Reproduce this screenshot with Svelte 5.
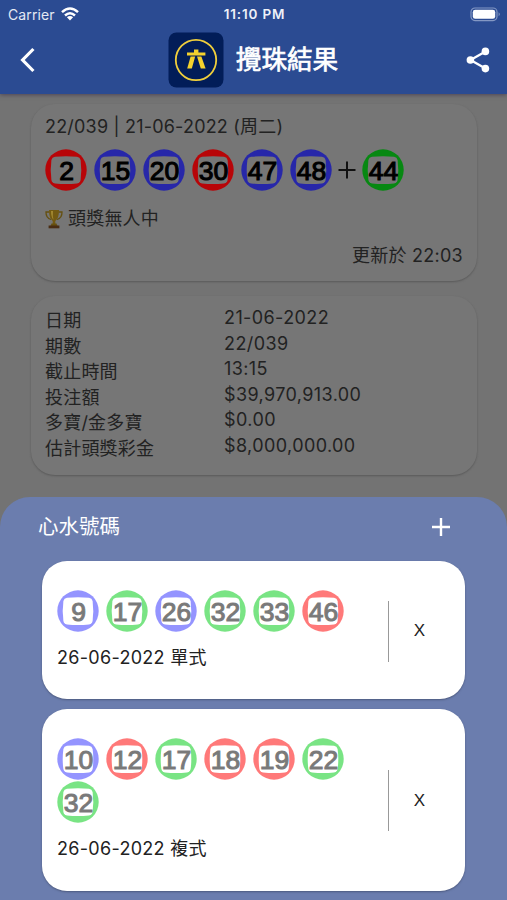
<script lang="ts">
	type Color = 'red' | 'blue' | 'green';
	type Ball = { n: number; color: Color };

	const RED = [1, 2, 7, 8, 12, 13, 18, 19, 23, 24, 29, 30, 34, 35, 40, 45, 46];
	const BLUE = [3, 4, 9, 10, 14, 15, 20, 25, 26, 31, 36, 37, 41, 42, 47, 48];

	function toBall(n: number): Ball {
		if (RED.includes(n)) return { n, color: 'red' };
		return { n, color: BLUE.includes(n) ? 'blue' : 'green' };
	}

	const drawn = [2, 15, 20, 30, 47, 48].map(toBall);
	const extra = toBall(44);

	const details = [
		['日期', '21-06-2022'],
		['期數', '22/039'],
		['截止時間', '13:15'],
		['投注額', '$39,970,913.00'],
		['多寶/金多寶', '$0.00'],
		['估計頭獎彩金', '$8,000,000.00']
	];

	const tickets = [
		{ date: '26-06-2022', type: '單式', balls: [9, 17, 26, 32, 33, 46].map(toBall) },
		{ date: '26-06-2022', type: '複式', balls: [10, 12, 17, 18, 19, 22, 32].map(toBall) }
	];
</script>

{#snippet ballIcon(ball: Ball)}
	<svg class="ball {ball.color}" viewBox="0 0 42 42">
		<circle cx="21" cy="21" r="20.7" />
		<path d="M10 7.8Q21 6.6 32 7.8Q35 8.2 35.6 11Q37 21 35.6 31Q35 34 32 34.4Q21 35.6 10 34.4Q7 34 6.4 31Q5 21 6.4 11Q7 8.2 10 7.8Z" />
		<text x="21.6" y="30.6" text-anchor="middle">{ball.n}</text>
	</svg>
{/snippet}

<div class="screen">
	<header>
		<div class="status">
			<span class="carrier">
				Carrier
				<svg width="18" height="14" viewBox="0 0 18 14">
					<g fill="none" stroke="#fff" stroke-width="2.5">
						<path d="M1 5.2Q9-2.2 17 5.2" />
						<path d="M4 8.5Q9 4 14 8.5" />
					</g>
					<path fill="#fff" d="M5.9 10.3Q9 7.8 12.1 10.3L9 13.5Z" />
				</svg>
			</span>
			<span class="clock">11:10 PM</span>
			<svg class="battery" width="31" height="15" viewBox="0 0 31 15">
				<rect x="1" y="1" width="26" height="12.6" rx="4" fill="none" stroke="#8498c4" stroke-width="1.2" />
				<rect x="2.8" y="2.8" width="22.4" height="9" rx="2.4" fill="#fff" />
				<path d="M28.6 5.3Q31 7.3 28.6 9.3Z" fill="#8498c4" />
			</svg>
		</div>
		<div class="bar">
			<svg class="back" width="18" height="26" viewBox="0 0 18 26">
				<path d="M13.4 2L2.6 13L13.4 24" fill="none" stroke="#fff" stroke-width="3.2" />
			</svg>
			<div class="title">
				<svg width="56" height="56" viewBox="0 0 56 56">
					<rect x=".5" y=".5" width="55" height="55" rx="8" fill="#021d58" />
					<circle cx="28" cy="28" r="20.2" fill="none" stroke="#efce3c" stroke-width="1.8" />
					<g fill="#f4d22d">
						<path d="M26 17.6H30.4V20.4H37.4V23.6H19V20.4H26Z" />
						<path d="M22.6 24.6H27.2L23.8 36.4H19.2Z" />
						<path d="M29 24.6H33.4L37.6 36.4H32.8Z" />
					</g>
				</svg>
				<h1>攪珠結果</h1>
			</div>
			<svg class="share" width="24" height="26" viewBox="0 0 24 26">
				<path d="M19.5 4.5L4.5 13L19.5 21.5" fill="none" stroke="#fff" stroke-width="2.3" />
				<g fill="#fff">
					<circle cx="19.4" cy="4.4" r="3.8" />
					<circle cx="4.4" cy="13" r="3.8" />
					<circle cx="19.4" cy="21.6" r="3.8" />
				</g>
			</svg>
		</div>
	</header>

	<main>
		<section class="card result">
			<p class="draw">22/039 | 21-06-2022 (周二)</p>
			<div class="balls">
				{#each drawn as ball}
					{@render ballIcon(ball)}
				{/each}
				<svg class="plus" width="18" height="18" viewBox="0 0 18 18">
					<path d="M9 .5V17.5M.5 9H17.5" />
				</svg>
				{@render ballIcon(extra)}
			</div>
			<p class="prize">
				<svg width="18" height="20" viewBox="0 0 18 20">
					<path d="M4.5 3H1Q.8 9 6 10.5M13.5 3H17Q17.2 9 12 10.5" fill="none" stroke="#655010" stroke-width="1.3" />
					<path d="M4 1H14Q14 9.5 10.3 12V15H7.7V12Q4 9.5 4 1Z" fill="#735a12" />
					<path d="M6 2H8Q7.4 7 8.5 10.7Q6 8 6 2Z" fill="#a38931" />
					<path d="M6.5 14.5H11.5L12.5 17H5.5Z" fill="#67500f" />
					<path d="M3.6 16.5H14.4V19.3H3.6Z" fill="#4a2d13" />
				</svg>
				頭獎無人中
			</p>
			<p class="updated">更新於 22:03</p>
		</section>

		<section class="card details">
			{#each details as [label, value]}
				<span class="label">{label}</span>
				<span class="value">{value}</span>
			{/each}
		</section>
	</main>

	<section class="sheet">
		<div class="sheet-head">
			<h2>心水號碼</h2>
			<svg width="18" height="18" viewBox="0 0 18 18">
				<path d="M9 0V18M0 9H18" stroke="#fff" stroke-width="2.4" />
			</svg>
		</div>
		{#each tickets as ticket}
			<article class="ticket">
				<div class="pick">
					<div class="balls">
						{#each ticket.balls as ball}
							{@render ballIcon(ball)}
						{/each}
					</div>
					<p>{ticket.date} {ticket.type}</p>
				</div>
				<div class="divider"></div>
				<button type="button">X</button>
			</article>
		{/each}
	</section>
</div>

<style>
	:global(body) {
		margin: 0;
		background: #737373;
	}

	.screen {
		display: flex;
		flex-direction: column;
		height: 900px;
		overflow: hidden;
		background: #737373;
		font-family: Inter, 'Noto Sans CJK TC', sans-serif;
		font-size: 18px;
		color: #222;
	}

	h1,
	h2,
	p {
		margin: 0;
		font-weight: 400;
		white-space: nowrap;
	}

	svg {
		display: block;
		flex: none;
	}

	header {
		flex: none;
		height: 94px;
		background: #2b4b92;
		color: #fff;
		box-shadow: 0 1px 4px #4d4657;
	}

	.status {
		display: grid;
		grid-template-columns: 1fr auto 1fr;
		align-items: center;
		height: 28px;
		padding: 0 6px 0 8px;
		font-size: 14px;
	}

	.carrier {
		display: flex;
		align-items: center;
		gap: 6px;
		letter-spacing: 0.1px;
		color: #e4e9f4;
	}

	.clock {
		font-size: 13.5px;
		font-weight: 600;
		letter-spacing: 0.8px;
		color: #eef1f8;
	}

	.battery {
		justify-self: end;
	}

	.bar {
		display: flex;
		align-items: center;
		justify-content: space-between;
		height: 63px;
		padding: 0 17px 0 20px;
	}

	.title {
		display: flex;
		align-items: center;
		gap: 12px;
		margin-left: 2px;
	}

	h1 {
		font-size: 25.6px;
		line-height: 36px;
		-webkit-text-stroke: 0.7px #fff;
	}

	main {
		flex: none;
		height: 403px;
		padding: 10px 30px 0 31px;
		box-sizing: border-box;
	}

	.card {
		box-sizing: border-box;
		border-radius: 24px;
		background: #767676;
		box-shadow: 0 1px 2px #5a5a5a;
	}

	.result {
		height: 177px;
		padding: 9px 14px 0;
	}

	.draw {
		line-height: 28px;
		letter-spacing: 0.2px;
	}

	.balls {
		display: flex;
		flex-wrap: wrap;
		align-items: center;
		gap: 1px 7px;
	}

	.result .balls {
		margin-top: 8px;
	}

	.ball {
		width: 42px;
		height: 42px;
	}

	.ball path {
		fill: #fff;
	}

	.ball text {
		font: 26.5px 'Liberation Sans', sans-serif;
		fill: #000;
		stroke: #000;
		stroke-width: 1.1px;
	}

	.red {
		fill: #f00;
	}

	.blue {
		fill: #33f;
	}

	.green {
		fill: #00cd15;
	}

	.ticket .ball {
		opacity: 0.52;
	}

	.result .ball path {
		fill: #767676;
	}

	.result .red {
		fill: #b80508;
	}

	.result .blue {
		fill: #2727a9;
	}

	.result .green {
		fill: #078812;
	}

	.plus {
		margin: 0 -1px 0 -1px;
		stroke: #111;
		stroke-width: 2;
	}

	.prize {
		display: flex;
		align-items: center;
		gap: 5px;
		margin-top: 14px;
		line-height: 28px;
		letter-spacing: 0.2px;
	}

	.updated {
		margin-top: 9px;
		line-height: 28px;
		text-align: right;
		letter-spacing: 0.25px;
	}

	.details {
		display: grid;
		grid-template-columns: 179px 1fr;
		grid-auto-rows: 25.6px;
		height: 179px;
		margin-top: 15px;
		padding: 10px 14px 0;
		white-space: nowrap;
	}

	.label {
		line-height: 29px;
		letter-spacing: 0.2px;
	}

	.value {
		line-height: 23px;
		letter-spacing: 0.4px;
	}

	.sheet {
		flex: 1;
		padding: 0 42px;
		border-radius: 30px 30px 0 0;
		background: #6b7dae;
	}

	.sheet-head {
		display: flex;
		align-items: center;
		justify-content: space-between;
		height: 59px;
		margin: 0 15px 5px -4px;
		color: #fff;
	}

	h2 {
		font-size: 20.5px;
		line-height: 30px;
	}

	.ticket {
		display: flex;
		align-items: center;
		box-sizing: border-box;
		padding: 29px 0 27px 15px;
		margin-bottom: 10px;
		border-radius: 25px;
		background: #fff;
		box-shadow: 0 1px 2px #4d5a7e;
	}

	.pick {
		width: 331px;
	}

	.pick p {
		margin-top: 12px;
		line-height: 28px;
		letter-spacing: 0.3px;
	}

	.pick .balls {
		width: 300px;
	}

	.ticket + .ticket {
		padding-bottom: 28px;
	}

	.divider {
		width: 1px;
		height: 61px;
		background: #999;
	}

	button {
		width: 61px;
		padding: 0;
		border: 0;
		background: none;
		font: 17px 'Liberation Sans', sans-serif;
		color: #1d1d1d;
	}
</style>
